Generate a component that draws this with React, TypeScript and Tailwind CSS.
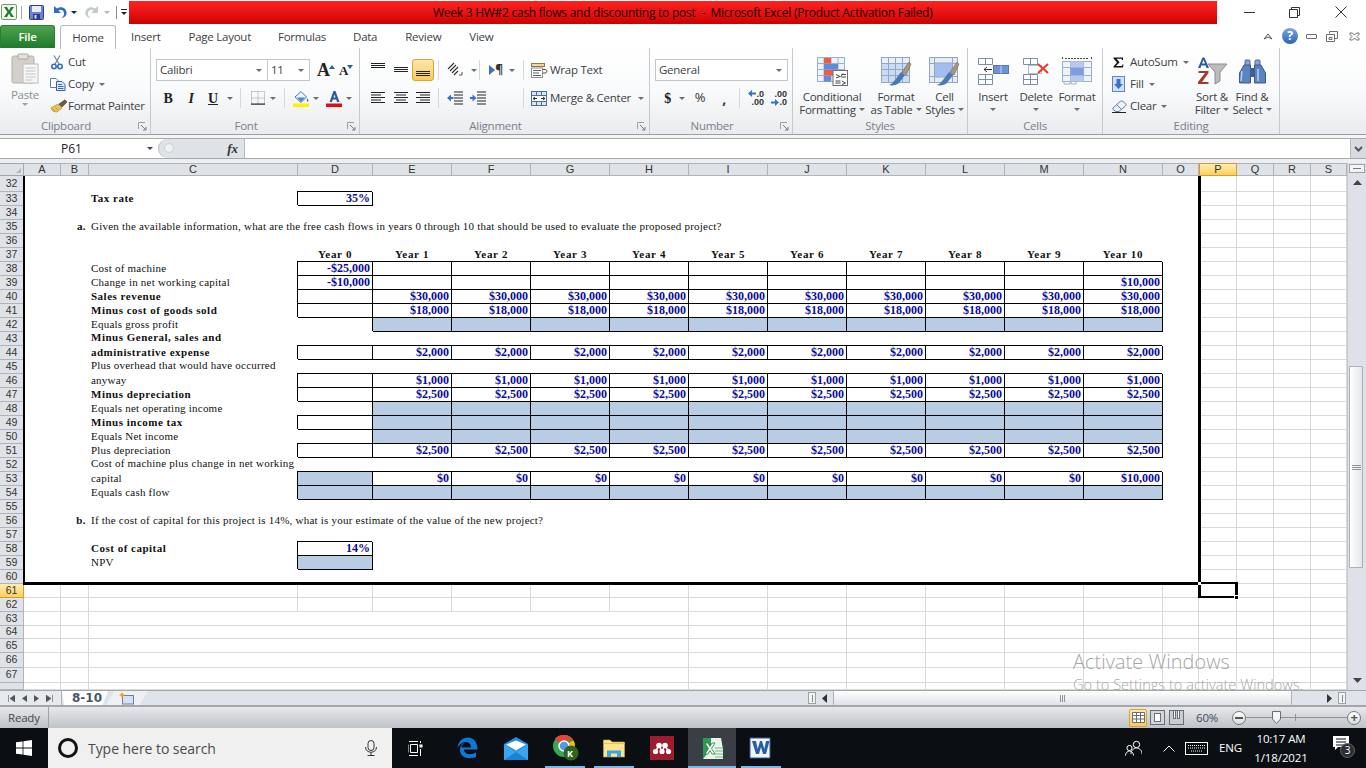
import React from "react";

const Caret = ({ c = "border-t-[#6b6f75]" }: { c?: string }) => (
  <span className={`inline-block w-0 h-0 border-l-[3px] border-r-[3px] border-t-[3px] border-l-transparent border-r-transparent ${c}`} />
);
const Sep = () => <div className="w-px h-[20px] bg-[#d5d8dc] shrink-0" />;

const Launcher = () => (
  <svg width="9" height="9" viewBox="0 0 9 9" className="absolute right-[3px] bottom-[3px]">
    <path d="M0.5 0.5H7M0.5 0.5V7" stroke="#9aa0a6" fill="none" />
    <path d="M3 3L8 8M8 5V8H5" stroke="#777c82" fill="none" />
  </svg>
);

const Group = ({ className, label, launcher, children }: { className: string; label: string; launcher?: boolean; children: React.ReactNode }) => (
  <div className={`${className} h-full flex flex-col border-r border-[#c6cad0] shrink-0 relative`}>
    <div className="h-[70px] flex">{children}</div>
    <div className={`h-[17px] flex items-center justify-center text-[#7b8088] ${launcher ? "pr-[18px]" : ""}`}>{label}</div>
    {launcher && <Launcher />}
  </div>
);

const Lines = ({ ws, y0 = 1, gap = 2.5, color = "#222" }: { ws: [number, number][]; y0?: number; gap?: number; color?: string }) => (
  <svg width="16" height="14" viewBox="0 0 16 14">
    {ws.map(([x, w], i) => (
      <rect key={i} x={x} y={y0 + i * gap} width={w} height="1" fill={color} />
    ))}
  </svg>
);

const PasteIcon = () => (
  <svg width="28" height="31" viewBox="0 0 28 31">
    <rect x="1" y="3" width="22" height="27" rx="2" fill="#d4cfc9" stroke="#b3aea8" />
    <rect x="7" y="1" width="10" height="5" rx="1" fill="#e5e2de" stroke="#a9a49e" />
    <rect x="12" y="11" width="15" height="19" fill="#f7f7f7" stroke="#bbb" />
    <path d="M14.5 15h10M14.5 18h10M14.5 21h10M14.5 24h10M14.5 27h7" stroke="#c4c4c4" />
  </svg>
);
const CutIcon = () => (
  <svg width="12" height="15" viewBox="0 0 12 15">
    <path d="M3 0.5L8 9M9 0.5L4 9" stroke="#7f8792" strokeWidth="1.3" fill="none" />
    <circle cx="3" cy="11.5" r="2.2" fill="none" stroke="#2f6fc0" strokeWidth="1.6" />
    <circle cx="9" cy="11.5" r="2.2" fill="none" stroke="#2f6fc0" strokeWidth="1.6" />
  </svg>
);
const CopyIcon = () => (
  <svg width="16" height="13" viewBox="0 0 16 13">
    <path d="M0.5 0.5H6L8 2.5V9.5H0.5Z" fill="#fff" stroke="#5a7fb0" />
    <path d="M6.5 3.5H12L15 6.5V12.5H6.5Z" fill="#dfeafa" stroke="#2f5fa8" />
    <path d="M8 6.5h4M8 8.5h5.5M8 10.5h5.5" stroke="#3a68ad" />
  </svg>
);
const PainterIcon = () => (
  <svg width="18" height="14" viewBox="0 0 18 14">
    <path d="M1 9L8 5L12 9L7 13C4 13 2 12 1 9Z" fill="#e9c65b" stroke="#a98a2c" strokeWidth="0.7" />
    <path d="M9 5L15 0.8L17 3L12 8Z" fill="#6b5c46" stroke="#43392b" strokeWidth="0.6" />
    <path d="M3 10L5 12M5.5 8.5L8 11" stroke="#a98a2c" strokeWidth="0.7" />
  </svg>
);
const GrowA = ({ small, up }: { small?: boolean; up?: boolean }) => (
  <span className={`relative inline-flex items-end font-['Liberation_Serif',serif] font-bold tracking-normal text-[#222] ${small ? "text-[13px]" : "text-[18px]"} leading-none`}>
    A
    <svg width="6" height="4" viewBox="0 0 6 4" className={`-ml-[1px] ${small ? "mb-[8px]" : "mb-[10px]"}`}>
      <path d={up ? "M0 4L3 0L6 4Z" : "M0 0H6L3 4Z"} fill="#2d5fa8" />
    </svg>
  </span>
);
const BordersIcon = () => (
  <svg width="14" height="14" viewBox="0 0 14 14">
    <path d="M0.5 0.5H13.5V13M0.5 0.5V13M7 0.5V13M0.5 7H13.5" stroke="#9a9a9a" strokeDasharray="1 1" fill="none" />
    <rect x="0" y="12.5" width="14" height="1.2" fill="#222" />
  </svg>
);
const FillIcon = () => (
  <svg width="17" height="17" viewBox="0 0 17 17">
    <path d="M2 7L8 1.5L13.5 7L8 12.5Z" fill="#eef3fa" stroke="#4a77b4" />
    <path d="M4 7.5H12L8 12Z" fill="#4f86c9" />
    <path d="M14 8c1.3 2 2 3 1.2 3.6S13.4 10.5 14 8Z" fill="#3c6fb3" />
    <rect x="0" y="13.5" width="16" height="3.5" fill="#fff200" />
  </svg>
);
const FontColor = () => (
  <svg width="17" height="17" viewBox="0 0 17 17">
    <path d="M3.5 12L7.5 1H9.5L13.5 12H11L10.2 9.5H6.8L6 12ZM7.5 7.5H9.5L8.5 4.5Z" fill="#2d5a9e" />
    <rect x="0" y="13.5" width="16" height="3.5" fill="#e8090f" />
  </svg>
);
const OrientIcon = () => (
  <svg width="18" height="16" viewBox="0 0 18 16">
    <g stroke="#333" strokeWidth="1.1" fill="none">
      <path d="M2 7L8 1M4 9L10 3M6 11L12 5M8 13L12 9" />
    </g>
    <path d="M13 13H16V10" stroke="#555" fill="none" />
  </svg>
);
const IndentMark = () => (
  <span className="flex items-center text-[12px] leading-none text-[#333]">
    <svg width="6" height="10" viewBox="0 0 6 10">
      <path d="M0 0L6 5L0 10Z" fill="#3b6fb8" />
    </svg>
    <span className="font-bold">¶</span>
  </span>
);
const IndentIcon = ({ dir }: { dir: "l" | "r" }) => (
  <svg width="16" height="14" viewBox="0 0 16 14">
    <path d="M7 1h9M7 4h9M7 7h9M7 10h9M7 13h9" stroke="#222" />
    <path d={dir === "l" ? "M0 7L4 3.5V6H6.5V8H4V10.5Z" : "M6.5 7L2.5 3.5V6H0V8H2.5V10.5Z"} fill="#3b72c4" />
  </svg>
);
const WrapIcon = () => (
  <svg width="17" height="15" viewBox="0 0 17 15">
    <rect x="0.5" y="0.5" width="13" height="3" fill="#e8d7b0" stroke="#a0752e" />
    <path d="M1 6.5H14C16.5 6.5 16.5 10 14 10H12" stroke="#444" fill="none" />
    <path d="M12 8.5V11.5L10 10Z" fill="#444" />
    <rect x="0.5" y="5" width="11" height="9.5" fill="#fff" stroke="#8a8f96" />
    <path d="M2 7.5H10M2 10H8M2 12.5H10" stroke="#5a6068" />
  </svg>
);
const MergeIcon = () => (
  <svg width="16" height="15" viewBox="0 0 16 15">
    <rect x="0.5" y="0.5" width="15" height="14" fill="#dbe6f4" stroke="#4f6c94" />
    <path d="M0.5 4.5H15.5M0.5 10.5H15.5M5.5 0.5V4.5M10.5 0.5V4.5M5.5 10.5V14.5M10.5 10.5V14.5" stroke="#4f6c94" />
    <rect x="1" y="5" width="14" height="5" fill="#fff" />
    <path d="M2 7.5H6M4 6L2 7.5L4 9M14 7.5H10M12 6L14 7.5L12 9" stroke="#333" fill="none" />
  </svg>
);
const DecIcon = ({ inc }: { inc?: boolean }) => (
  <span className="relative flex flex-col items-end w-[16px] font-bold text-[9px] leading-[8px] tracking-normal text-[#333] font-['Liberation_Sans',sans-serif]">
    <span>{inc ? ".0" : ".00"}</span>
    <span>{inc ? ".00" : ".0"}</span>
    <svg width="8" height="7" viewBox="0 0 8 7" className={`absolute left-0 ${inc ? "top-0" : "top-[9px]"}`}>
      <path d={inc ? "M0 3.5L4 0V2.5H8V4.5H4V7Z" : "M8 3.5L4 0V2.5H0V4.5H4V7Z"} fill="#3b72c4" />
    </svg>
  </span>
);
const CondIcon = () => (
  <svg width="31" height="29" viewBox="0 0 31 29">
    <rect x="0.5" y="0.5" width="27" height="24" fill="#eef2f9" stroke="#9eb0c8" />
    <path d="M7 0.5V24.5M14 0.5V24.5M21 0.5V24.5M0.5 6.5H27.5M0.5 12.5H27.5M0.5 18.5H27.5" stroke="#9eb0c8" />
    <rect x="7" y="1" width="7" height="5.5" fill="#ef5a44" />
    <rect x="7" y="7" width="14" height="5.5" fill="#5a8ddb" />
    <rect x="7" y="13" width="14" height="5.5" fill="#ef5a44" />
    <rect x="7" y="19" width="7" height="5.5" fill="#5a8ddb" />
    <rect x="16" y="13.5" width="14.5" height="15" fill="#fff" stroke="#6b6f75" />
    <path d="M19 17.5L23 19.5L19 21M18.5 24H23.5M18.5 26H23.5M26 16.5L23.5 20M24.5 17.5H29M24.5 20H29M25 24L28.5 26L25 27.5" stroke="#333" fill="none" strokeWidth="0.9" />
  </svg>
);
const Brush = () => (
  <g>
    <path d="M14 23L20 15L24 18L18 26C16 28 11 29 8 28C11 27 12 25 14 23Z" fill="#4b78b8" />
    <path d="M21 15L28 5L30 7L25 18Z" fill="#a9977c" stroke="#6f6350" strokeWidth="0.6" />
  </g>
);
const TableIcon = () => (
  <svg width="31" height="29" viewBox="0 0 31 29">
    <rect x="0.5" y="0.5" width="28" height="25" fill="#c9dbf6" stroke="#93a7c2" />
    <rect x="1" y="1" width="27" height="5" fill="#e9f0fb" />
    <path d="M7.5 0.5V25.5M14.5 0.5V25.5M21.5 0.5V25.5M0.5 6.5H28.5M0.5 12.5H28.5M0.5 18.5H28.5" stroke="#93a7c2" />
    <Brush />
  </svg>
);
const CellStylesIcon = () => (
  <svg width="31" height="29" viewBox="0 0 31 29">
    <rect x="0.5" y="0.5" width="28" height="25" fill="#e6ecf5" stroke="#93a7c2" />
    <path d="M0.5 6.5H5.5M23.5 6.5H28.5M0.5 19.5H5.5M23.5 19.5H28.5M5.5 0.5V6.5M23.5 0.5V6.5M5.5 19.5V25.5M23.5 19.5V25.5" stroke="#93a7c2" />
    <rect x="5.5" y="6" width="18" height="14" fill="#a3bdf0" stroke="#93a7c2" />
    <Brush />
  </svg>
);
const InsertIcon = () => (
  <svg width="31" height="27" viewBox="0 0 31 27">
    <path d="M0.5 0.5H14.5V6.5H0.5ZM7.5 0.5V6.5M0.5 16.5H14.5V26.5H0.5ZM7.5 16.5V26.5M0.5 21.5H14.5" fill="#fff" stroke="#7d8ea6" />
    <rect x="15.5" y="7.5" width="15" height="8" fill="#6f93d8" stroke="#5a76a8" />
    <path d="M23 7.5V15.5" stroke="#c7d5ef" />
    <path d="M14 11.5H6M9 9L6 11.5L9 14" stroke="#333" fill="none" />
  </svg>
);
const DeleteIcon = () => (
  <svg width="27" height="27" viewBox="0 0 27 27">
    <path d="M0.5 0.5H14.5V6.5H0.5ZM7.5 0.5V6.5M0.5 16.5H14.5V26.5H0.5ZM7.5 16.5V26.5M0.5 21.5H14.5" fill="#fff" stroke="#7d8ea6" />
    <rect x="5.5" y="7.5" width="13" height="8" fill="#fff" stroke="#5d78ad" strokeDasharray="1 1" />
    <path d="M15 6L25 15M25 6L15 15" stroke="#ea3a22" strokeWidth="2" />
  </svg>
);
const FormatIcon = () => (
  <svg width="30" height="30" viewBox="0 0 30 30">
    <path d="M0.5 1V4M29.5 1V4M3 2.5H27" stroke="#444" strokeDasharray="2 1" fill="none" />
    <rect x="0.5" y="5.5" width="29" height="20" fill="#eef2f9" stroke="#9eb0c8" />
    <path d="M8.5 5.5V25.5M21.5 5.5V25.5M0.5 11.5H29.5M0.5 19.5H29.5" stroke="#9eb0c8" />
    <rect x="8.5" y="11.5" width="13" height="8" fill="#7d9ee0" />
    <rect x="8.5" y="5.5" width="13" height="6" fill="#b8caec" />
    <rect x="8.5" y="19.5" width="13" height="6" fill="#b8caec" />
    <path d="M2 25.5V28H8V25.5M9 25.5V28H14V25.5" fill="none" stroke="#9eb0c8" />
  </svg>
);
const SigmaIcon = () => (
  <svg width="11" height="11" viewBox="0 0 11 11">
    <path d="M0.5 0.5H10V3H9L8.5 1.8H3.5L6.5 5.2L3 9H9L9.5 7.5H10.5L10 10.5H0.5V9.5L4 5.5L0.5 1.5Z" fill="#111" />
  </svg>
);
const FillDown = () => (
  <svg width="13" height="16" viewBox="0 0 13 16">
    <rect x="0.5" y="0.5" width="12" height="15" fill="#cfe0f7" stroke="#5e86c0" />
    <path d="M4.5 3H8.5V8H11L6.5 13L2 8H4.5Z" fill="#3a72c6" />
  </svg>
);
const EraserIcon = () => (
  <svg width="15" height="13" viewBox="0 0 15 13">
    <path d="M1 8L8 1.5C9 0.8 10 0.8 11 1.5L13.5 3.5C14.3 4.3 14.3 5 13.5 6L7 11.5H4L1 9.5Z" fill="#eef0f3" stroke="#5e7fae" />
    <path d="M4.5 4.5L9 9" stroke="#5e7fae" />
    <path d="M0 12.5H14" stroke="#222" />
  </svg>
);
const SortIcon = () => (
  <svg width="31" height="28" viewBox="0 0 31 28">
    <path d="M11 7H30L23 15V24L18 27V15Z" fill="#bcbcbc" stroke="#8c8c8c" />
    <path d="M1 11L5.5 0.5H7.5L12 11H9.5L8.7 8.5H4.3L3.5 11ZM5 6.5H8L6.5 3Z" fill="#2f5aa0" />
    <path d="M1.5 14H11.5V16L5 25H11.5V27H1V25L8 16H1.5Z" fill="#a23a30" />
  </svg>
);
const BinocIcon = () => (
  <svg width="27" height="25" viewBox="0 0 27 25">
    <rect x="6" y="1" width="5" height="6" rx="1" fill="#8aa5cf" stroke="#4c6694" />
    <rect x="16" y="1" width="5" height="6" rx="1" fill="#8aa5cf" stroke="#4c6694" />
    <path d="M5 6H11.5V24H0.5V14Z" fill="#5b83c0" stroke="#3e5a8c" />
    <path d="M15.5 6H22L26.5 14V24H15.5Z" fill="#5b83c0" stroke="#3e5a8c" />
    <rect x="11" y="9" width="5" height="9" fill="#42608f" />
    <path d="M3 12L2 22M19 10V22" stroke="#b9cdea" strokeWidth="1.5" />
  </svg>
);

const SmallRow = ({ icon, label, caret, slot }: { icon: React.ReactNode; label: string; caret?: boolean; slot: string }) => (
  <div className="h-[22px] flex items-center whitespace-nowrap">
    <span className={`${slot} flex shrink-0`}>{icon}</span>
    <span>{label}</span>
    {caret && (
      <span className="ml-[5px] flex items-center">
        <Caret />
      </span>
    )}
  </div>
);

const BigBtn = ({ className, icon, l1, l2 }: { className: string; icon: React.ReactNode; l1: string; l2: string }) => (
  <div className={`${className} flex flex-col items-center shrink-0 pt-[8px] whitespace-nowrap`}>
    <div className="h-[30px] flex items-center">{icon}</div>
    <div className="mt-[4px] text-center leading-[13px]">
      <div>{l1}</div>
      <div className="flex items-center justify-center gap-[3px] h-[13px]">
        {l2}
        <Caret />
      </div>
    </div>
  </div>
);

const ComboBox = ({ className, text }: { className: string; text: string }) => (
  <div className={`${className} h-[22px] bg-white border border-[#c3c7cc] flex items-center justify-between pl-[3px] pr-[5px]`}>
    <span>{text}</span>
    <Caret />
  </div>
);

function Ribbon() {
  return (
    <div className="h-[87px] flex text-[11.5px] tracking-[-0.25px] text-[#3b3f45] border-b border-[#9ca0a6] bg-gradient-to-b from-white via-[#f9fafb] to-[#e9ebee]">
      <Group className="w-[151px]" label="Clipboard" launcher>
        <div className="w-[50px] flex flex-col items-center pt-[5px] text-[#8f8f8f]">
          <PasteIcon />
          <span className="mt-[3px] leading-[15px]">Paste</span>
          <span className="mt-[1px] flex"><Caret c="border-t-[#a0a0a0]" /></span>
        </div>
        <div className="pt-[3px]">
          <SmallRow slot="w-[18px] pl-[1px]" icon={<CutIcon />} label="Cut" />
          <SmallRow slot="w-[18px]" icon={<CopyIcon />} label="Copy" caret />
          <SmallRow slot="w-[18px]" icon={<PainterIcon />} label="Format Painter" />
        </div>
      </Group>
      <Group className="w-[209px]" label="Font" launcher>
        <div className="pt-[11px] pl-[5px]">
          <div className="flex items-center">
            <ComboBox className="w-[112px]" text="Calibri" />
            <ComboBox className="w-[43px] -ml-px" text="11" />
            <span className="ml-[7px] w-[22px] flex"><GrowA up /></span>
            <span className="w-[14px] flex"><GrowA small /></span>
          </div>
          <div className="flex items-center h-[20px] mt-[7px]">
            <span className="w-[24px] font-['Liberation_Serif',serif] font-bold text-[14px] text-[#222] text-center">B</span>
            <span className="w-[22px] font-['Liberation_Serif',serif] italic font-bold text-[14px] text-[#222] text-center">I</span>
            <span className="w-[22px] font-['Liberation_Serif',serif] font-bold underline text-[14px] text-[#222] text-center">U</span>
            <span className="w-[11px] flex justify-center"><Caret /></span>
            <span className="ml-[5px]"><Sep /></span>
            <span className="ml-[10px] flex"><BordersIcon /></span>
            <span className="ml-[5px] flex"><Caret /></span>
            <span className="ml-[8px]"><Sep /></span>
            <span className="ml-[8px] flex"><FillIcon /></span>
            <span className="ml-[3px] flex"><Caret /></span>
            <span className="ml-[7px] flex"><FontColor /></span>
            <span className="ml-[3px] flex"><Caret /></span>
          </div>
        </div>
      </Group>
      <Group className="w-[290px]" label="Alignment" launcher>
        <div className="pt-[11px] pl-[6px]">
          <div className="flex items-center h-[22px]">
            <span className="w-[23px] flex justify-center"><Lines ws={[[1, 14], [1, 14], [1, 14]]} y0={0} gap={2} /></span>
            <span className="w-[23px] flex justify-center"><Lines ws={[[1, 14], [1, 14], [1, 14]]} y0={4} gap={2} /></span>
            <span className="w-[22px] h-[22px] flex justify-center items-center rounded-[3px] border border-[#d8a33b] bg-gradient-to-b from-[#fde9a8] to-[#fbc95e]">
              <Lines ws={[[1, 14], [1, 14], [1, 14]]} y0={8} gap={2} />
            </span>
            <span className="ml-[4px]"><Sep /></span>
            <span className="w-[32px] flex justify-center"><OrientIcon /></span>
            <span className="w-[8px] flex"><Caret /></span>
            <Sep />
            <span className="w-[32px] flex justify-center"><IndentMark /></span>
            <span className="w-[14px] -ml-[3px] flex"><Caret /></span>
            <Sep />
            <span className="ml-[7px] w-[20px]"><WrapIcon /></span>
            <span className="-ml-px">Wrap Text</span>
          </div>
          <div className="flex items-center h-[20px] mt-[7px]">
            <span className="w-[23px] flex justify-center"><Lines ws={[[1, 14], [1, 10], [1, 14], [1, 10], [1, 14]]} /></span>
            <span className="w-[23px] flex justify-center"><Lines ws={[[1, 14], [3, 10], [1, 14], [3, 10], [1, 14]]} /></span>
            <span className="w-[22px] flex justify-center"><Lines ws={[[1, 14], [5, 10], [1, 14], [5, 10], [1, 14]]} /></span>
            <span className="ml-[4px]"><Sep /></span>
            <span className="ml-[8px] flex"><IndentIcon dir="l" /></span>
            <span className="ml-[7px] flex"><IndentIcon dir="r" /></span>
            <span className="ml-[37px]"><Sep /></span>
            <span className="ml-[7px] w-[20px] flex"><MergeIcon /></span>
            <span className="-ml-px whitespace-nowrap">Merge &amp; Center</span>
            <span className="ml-[7px] flex"><Caret /></span>
          </div>
        </div>
      </Group>
      <Group className="w-[143px]" label="Number" launcher>
        <div className="pt-[11px] pl-[5px]">
          <ComboBox className="w-[133px]" text="General" />
          <div className="flex items-center h-[20px] mt-[7px]">
            <span className="w-[22px] text-center font-bold text-[14px] text-[#222] font-['Liberation_Serif',serif] pl-[3px]">$</span>
            <span className="w-[10px] flex justify-center"><Caret /></span>
            <span className="w-[26px] text-center text-[13px] text-[#333]">%</span>
            <span className="w-[22px] text-center font-bold text-[14px] text-[#333]">,</span>
            <span className="ml-[4px]"><Sep /></span>
            <span className="ml-[8px]"><DecIcon inc /></span>
            <span className="ml-[7px]"><DecIcon /></span>
          </div>
        </div>
      </Group>
      <Group className="w-[175px]" label="Styles">
        <BigBtn className="w-[78px]" icon={<CondIcon />} l1="Conditional" l2="Formatting" />
        <BigBtn className="w-[50px]" icon={<TableIcon />} l1="Format" l2="as Table" />
        <BigBtn className="w-[47px]" icon={<CellStylesIcon />} l1="Cell" l2="Styles" />
      </Group>
      <Group className="w-[135px]" label="Cells">
        {[
          ["w-[50px]", <InsertIcon />, "Insert"],
          ["w-[36px]", <DeleteIcon />, "Delete"],
          ["w-[46px]", <FormatIcon />, "Format"],
        ].map(([w, ic, t], i) => (
          <div key={i} className={`${w} flex flex-col items-center pt-[8px] shrink-0`}>
            <div className="h-[30px] flex items-center">{ic}</div>
            <div className="mt-[4px] leading-[13px]">{t}</div>
            <div className="h-[13px] flex items-center"><Caret /></div>
          </div>
        ))}
      </Group>
      <Group className="w-[177px]" label="Editing">
        <div className="w-[86px] pt-[3px] pl-[9px] shrink-0">
          <SmallRow slot="w-[18px] pl-[1px]" icon={<SigmaIcon />} label="AutoSum" caret />
          <SmallRow slot="w-[18px]" icon={<FillDown />} label="Fill" caret />
          <SmallRow slot="w-[18px]" icon={<EraserIcon />} label="Clear" caret />
        </div>
        <BigBtn className="w-[46px]" icon={<SortIcon />} l1="Sort &" l2="Filter" />
        <BigBtn className="w-[34px]" icon={<BinocIcon />} l1="Find &" l2="Select" />
      </Group>
    </div>
  );
}

function TitleBar() {
  return (
    <div className="h-6 flex bg-white">
      <div className="w-[129px] flex items-center shrink-0">
        <svg width="16" height="16" viewBox="0 0 16 16" className="ml-[1px]">
          <rect x="0.5" y="0.5" width="15" height="15" rx="1.5" fill="#f1f7ee" stroke="#6fa269" />
          <path d="M3 3H6L8 6.4L10 3H13L9.5 8L13 13H10L8 9.6L6 13H3L6.5 8Z" fill="#1f7a3a" />
        </svg>
        <span className="ml-[4px] w-px h-[13px] bg-[#a8a8a8]" />
        <svg width="15" height="15" viewBox="0 0 15 15" className="ml-[7px]">
          <rect x="0.5" y="0.5" width="14" height="14" rx="1" fill="#6f81d3" stroke="#2b3c8f" />
          <rect x="3" y="1" width="9" height="6" fill="#e9edf8" />
          <rect x="4" y="9" width="7" height="5.5" fill="#2b3c8f" />
          <rect x="5.5" y="10" width="2" height="3.5" fill="#d8def5" />
        </svg>
        <svg width="14" height="14" viewBox="0 0 14 14" className="ml-[9px]">
          <path d="M1 1V8H8L5.5 5.5C7.5 4 10.5 5 11 8C11.3 10 10 12 8.5 13C12 12.5 14 10 13.5 7C13 3 8 0.5 4 3.5Z" fill="#2f6dc0" />
        </svg>
        <span className="ml-[4px] flex"><Caret c="border-t-[#222]" /></span>
        <svg width="14" height="14" viewBox="0 0 14 14" className="ml-[8px]">
          <path d="M13 1V8H6L8.5 5.5C6.5 4 3.5 5 3 8C2.7 10 4 12 5.5 13C2 12.5 0 10 0.5 7C1 3 6 0.5 10 3.5Z" fill="#c4cbcf" />
        </svg>
        <span className="ml-[5px] flex"><Caret c="border-t-[#b5b5b5]" /></span>
        <span className="ml-[6px] w-px h-[13px] bg-[#8c8c8c]" />
        <span className="ml-[4px] flex flex-col items-center gap-[2px]">
          <span className="w-[6px] h-px bg-[#222]" />
          <Caret c="border-t-[#222]" />
        </span>
      </div>
      <div className="w-[1088px] mt-px flex items-center pl-[304px] text-[12px] tracking-[-0.26px] text-[#240000] bg-gradient-to-b from-[#ff2222] to-[#cf0000] whitespace-pre">
        Week 3 HW#2 cash flows and discounting to post  -  Microsoft Excel (Product Activation Failed)
      </div>
      <div className="flex-1 flex items-center">
        <span className="ml-[27px] w-[11px] h-px bg-[#333]" />
        <svg width="11" height="11" viewBox="0 0 11 11" className="ml-[34px]">
          <path d="M0.5 2.5H8.5V10.5H0.5ZM2.5 2.5V0.5H10.5V8.5H8.5" fill="none" stroke="#333" />
        </svg>
        <svg width="12" height="12" viewBox="0 0 12 12" className="ml-[35px]">
          <path d="M0.5 0.5L11.5 11.5M11.5 0.5L0.5 11.5" stroke="#333" />
        </svg>
      </div>
    </div>
  );
}

function TabRow() {
  const tabs: [string, string][] = [
    ["Insert", "ml-[15px]"],
    ["Page Layout", "ml-[28px]"],
    ["Formulas", "ml-[27px]"],
    ["Data", "ml-[27px]"],
    ["Review", "ml-[28px]"],
    ["View", "ml-[28px]"],
  ];
  return (
    <div className="h-6 flex items-end bg-white text-[11.5px] tracking-[-0.25px] text-[#3b3f45] relative">
      <div className="w-[55px] h-[23px] rounded-t-[3px] flex items-center justify-center text-white font-semibold bg-gradient-to-b from-[#4ea34c] to-[#1b7a2c] border border-[#2c7d35] border-b-0">
        File
      </div>
      <div className="ml-[5px] w-[56px] h-[24px] rounded-t-[3px] border border-[#b9bdc3] border-b-0 bg-white flex items-center justify-center -mb-px z-10">
        Home
      </div>
      {tabs.map(([t, m]) => (
        <div key={t} className={`${m} h-[23px] flex items-center`}>{t}</div>
      ))}
      <div className="flex-1 h-[24px] flex items-center justify-end pr-[6px]">
        <svg width="10" height="7" viewBox="0 0 10 7" className="mr-[9px]">
          <path d="M1 6L5 1L9 6L5 4Z" fill="#fff" stroke="#555" />
        </svg>
        <span className="w-[16px] h-[16px] rounded-full bg-gradient-to-b from-[#7ba8e2] to-[#2c62b8] text-white font-bold text-[12px] leading-[16px] text-center mr-[8px]">?</span>
        <span className="w-[11px] h-[5px] rounded-[1px] border border-[#6a6f76] mr-[9px]" />
        <svg width="12" height="11" viewBox="0 0 12 11" className="mr-[11px]">
          <path d="M3.5 2.5V0.5H11.5V7.5H8.5M0.5 3.5H8.5V10.5H0.5ZM3 6.5H6V8.5H3Z" fill="none" stroke="#6a6f76" />
        </svg>
        <svg width="11" height="9" viewBox="0 0 11 9">
          <path d="M1 1H3.5L5.5 3L7.5 1H10V2.5L8 4.5L10 6.5V8H7.5L5.5 6L3.5 8H1V6.5L3 4.5L1 2.5Z" fill="#fff" stroke="#6a6f76" />
        </svg>
      </div>
    </div>
  );
}

function FormulaBar() {
  return (
    <div className="h-[25px] bg-[#eceef1]">
      <div className="mt-0 h-[21px] flex bg-white border-t border-b border-[#a7abb1]">
        <div className="w-[158px] shrink-0 flex items-center pl-[61px] text-[12px] text-[#222] relative">
          P61
          <span className="absolute left-[147px] top-[8px] flex"><Caret c="border-t-[#444]" /></span>
        </div>
        <div className="w-[86px] shrink-0 flex items-center justify-end pr-[6px] bg-[#dfe3e8] rounded-l-full border-l border-[#b7bbc1] relative font-['Liberation_Serif',serif] italic font-bold text-[13px] text-[#333]">
          <span className="absolute left-[5px] top-[4px] w-[10px] h-[10px] rounded-full bg-[#eef0f3] border border-[#cdd1d6]" />
          <span>fx</span>
        </div>
        <div className="flex-1 border-l border-[#b7bbc1]" />
        <div className="w-[16px] shrink-0 bg-[#d7dbe1] flex items-center justify-center border-l border-[#b7bbc1]">
          <svg width="9" height="6" viewBox="0 0 9 6">
            <path d="M1 1L4.5 4.5L8 1" stroke="#555" strokeWidth="2" fill="none" />
          </svg>
        </div>
      </div>
    </div>
  );
}

const COLS = ["A", "B", "C", "D", "E", "F", "G", "H", "I", "J", "K", "L", "M", "N", "O", "P", "Q", "R", "S"];
const YEARCOLS = ["E", "F", "G", "H", "I", "J", "K", "L", "M", "N"];
const ROWS = Array.from({ length: 37 }, (_, i) => 32 + i);

type Cell = { t?: string; k?: "l" | "b" | "n" | "y"; box?: boolean; fill?: boolean; up?: boolean };

const labels: Record<number, [string, "l" | "b", boolean?]> = {
  33: ["Tax rate", "b"],
  38: ["Cost of machine", "l"],
  39: ["Change in net working capital", "l"],
  40: ["Sales revenue", "b"],
  41: ["Minus cost of goods sold", "b"],
  42: ["Equals gross profit", "l"],
  43: ["Minus General, sales and", "b", true],
  44: ["administrative expense", "b"],
  45: ["Plus overhead that would have occurred", "l", true],
  46: ["anyway", "l"],
  47: ["Minus depreciation", "b"],
  48: ["Equals net operating income", "l"],
  49: ["Minus income tax", "b"],
  50: ["Equals Net income", "l"],
  51: ["Plus depreciation", "l"],
  52: ["Cost of machine plus change in net working", "l", true],
  53: ["capital", "l"],
  54: ["Equals cash flow", "l"],
  58: ["Cost of capital", "b"],
  59: ["NPV", "l"],
  35: ["Given the available information, what are the free cash flows in years 0 through 10 that should be used to evaluate the proposed project?", "l"],
  56: ["If the cost of capital for this project is 14%, what is your estimate of the value of the new project?", "l"],
};
const yearVals: Record<number, string> = { 40: "$30,000", 41: "$18,000", 44: "$2,000", 46: "$1,000", 47: "$2,500", 51: "$2,500", 53: "$0" };
const dBoxes: Record<number, Cell> = {
  33: { t: "35%", k: "n", box: true },
  38: { t: "-$25,000", k: "n", box: true },
  39: { t: "-$10,000", k: "n", box: true },
  40: { box: true },
  41: { box: true },
  44: { box: true },
  46: { box: true },
  47: { box: true },
  49: { box: true },
  51: { box: true },
  53: { box: true, fill: true },
  54: { box: true, fill: true },
  58: { t: "14%", k: "n", box: true },
  59: { box: true, fill: true },
};

function getCell(r: number, c: string): Cell {
  if (c === "C" && labels[r]) return { t: labels[r][0], k: labels[r][1], up: labels[r][2] };
  if (c === "B" && r === 35) return { t: "a.", k: "b" };
  if (c === "B" && r === 56) return { t: "b.", k: "b" };
  if (r === 37 && c === "D") return { t: "Year 0", k: "y" };
  if (c === "D" && dBoxes[r]) return dBoxes[r];
  const yi = YEARCOLS.indexOf(c);
  if (yi >= 0) {
    if (r === 37) return { t: `Year ${yi + 1}`, k: "y" };
    if (r === 38) return { box: true };
    if (r === 39) return c === "N" ? { t: "$10,000", k: "n", box: true } : { box: true };
    if (r === 53 && c === "N") return { t: "$10,000", k: "n", box: true };
    if (yearVals[r]) return { t: yearVals[r], k: "n", box: true };
    if ([42, 48, 49, 50, 54].includes(r)) return { box: true, fill: true };
  }
  return {};
}

function cellClass(r: number, c: string, cell: Cell) {
  const parts: string[] = ["min-w-0 whitespace-nowrap"];
  const i = COLS.indexOf(c);
  if (cell.box) {
    parts.push("border-r border-b border-black shadow-[-1px_-1px_0_0_#000]");
  } else if (r >= 61) {
    parts.push("border-b border-[#d9d9d9]");
    if (r <= 62 || !["C", "D", "E", "F", "G"].includes(c)) parts.push("border-r");
  } else if (i >= 15) {
    parts.push("border-b border-r border-[#d9d9d9]");
  }
  if (cell.fill) parts.push("bg-[#b8cce4]");
  if (cell.k === "l") parts.push("pl-[2px] text-[11px] tracking-[0.22px] text-[#111]");
  if (cell.k === "b" && c === "C") parts.push("pl-[2px] text-[11px] font-bold tracking-[0.5px] text-[#111]");
  if (cell.k === "b" && c === "B") parts.push("text-right pr-[3px] text-[11px] font-bold tracking-[0.4px] text-[#111]");
  if (cell.k === "n") parts.push("text-right pr-[2px] text-[12px] font-bold text-[#0b0b9a]");
  if (cell.k === "y") parts.push("text-center pr-[1px] text-[11px] font-bold tracking-[0.7px] text-[#111]");
  parts.push(cell.up ? "leading-[10px]" : "leading-[13px]");
  return parts.join(" ");
}

function Sheet() {
  return (
    <div className="relative w-[1347px] shrink-0 bg-white font-['Liberation_Serif',serif] overflow-hidden">
      <div className="grid grid-cols-[24px_37px_28px_209px_75px_repeat(10,79px)_36px_38px_37px_37px_36px] grid-rows-[13px_16px_repeat(28,14px)_14px_14px_14px_13px_14px_15px_15px_7px]">
        <div className="bg-[#dfe3e8] border-r border-b border-[#a3a7ad] border-t flex items-end justify-end pr-[2px] pb-[2px]">
          <span className="w-0 h-0 border-b-[5px] border-l-[5px] border-l-transparent border-b-[#b4b8be]" />
        </div>
        {COLS.map((c) => (
          <div
            key={c}
            className={
              c === "P"
                ? "border border-[#d59a3a] bg-gradient-to-b from-[#ffeeb0] to-[#fbd055] flex items-center justify-center font-['Liberation_Sans',sans-serif] text-[11px] text-[#333]"
                : "border-t border-b border-r border-[#b0b4ba] bg-[#dfe3e8] flex items-center justify-center font-['Liberation_Sans',sans-serif] text-[11px] text-[#333]"
            }
          >
            {c}
          </div>
        ))}
        {ROWS.map((r) => (
          <React.Fragment key={r}>
            <div
              className={
                r === 61
                  ? "border-b border-r border-[#d59a3a] bg-gradient-to-b from-[#ffeeb0] to-[#fbd055] flex items-center justify-center font-['Liberation_Sans',sans-serif] text-[10.5px] text-[#333]"
                  : "border-b border-r border-[#b0b4ba] bg-[#dfe3e8] flex items-center justify-center font-['Liberation_Sans',sans-serif] text-[10.5px] text-[#333] overflow-hidden"
              }
            >
              {r < 68 ? r : ""}
            </div>
            {COLS.map((c) => {
              const cell = getCell(r, c);
              return (
                <div key={c} className={cellClass(r, c, cell)}>
                  {cell.t}
                </div>
              );
            })}
          </React.Fragment>
        ))}
      </div>
      <div className="absolute left-[23px] top-[13px] w-[1178px] h-[409px] border-l-2 border-r-[3px] border-b-[3px] border-black pointer-events-none" />
      <div className="absolute left-[1198px] top-[419px] w-[40px] h-[16px] border-[3px] border-t-[2px] border-b-[2px] border-black pointer-events-none" />
      <div className="absolute left-[1198px] top-[419px] w-[3px] h-[3px] bg-white pointer-events-none" />
      <div className="absolute left-[1234px] top-[432px] w-[5px] h-[5px] bg-black border border-white pointer-events-none" />
      <div className="absolute left-[1073px] top-[486px] font-['Open_Sans',sans-serif] font-light text-[#a6a6a6] pointer-events-none whitespace-nowrap">
        <div className="text-[19.8px] leading-[26px] tracking-[0.1px]">Activate Windows</div>
        <div className="text-[14.6px] leading-[20px] -mt-px">Go to Settings to activate Windows.</div>
      </div>
    </div>
  );
}

const VScroll = () => (
  <div className="flex-1 flex flex-col bg-[#dee2e8] border-l border-[#c3c7cd]">
    <div className="h-[9px] mx-[1px] mt-px border border-[#9da2a8] bg-[#f3f4f6] flex items-center justify-center shrink-0">
      <span className="w-[8px] h-px bg-[#777]" />
    </div>
    <div className="h-[18px] flex items-center justify-center shrink-0">
      <svg width="9" height="5" viewBox="0 0 9 5"><path d="M0 5L4.5 0L9 5Z" fill="#444" /></svg>
    </div>
    <div className="h-[175px] shrink-0" />
    <div className="h-[202px] mx-[1px] mr-[3px] shrink-0 bg-gradient-to-r from-white to-[#e4e7eb] border border-[#adb1b7] rounded-[1px] flex items-center justify-center">
      <svg width="9" height="5" viewBox="0 0 9 5"><path d="M0 0.5H9M0 2.5H9M0 4.5H9" stroke="#8f9399" /></svg>
    </div>
    <div className="flex-1" />
    <div className="h-[18px] flex items-center justify-center shrink-0 mb-[1px]">
      <svg width="9" height="5" viewBox="0 0 9 5"><path d="M0 0L4.5 5L9 0Z" fill="#444" /></svg>
    </div>
  </div>
);

function TabBar() {
  return (
    <div className="h-4 flex bg-[#dfe3ea] border-t border-[#a3a7ad] border-b relative">
      <div className="w-[62px] flex items-center justify-around px-[4px] bg-[#e6e9ee] border-r border-[#b0b4ba]">
        <svg width="7" height="7" viewBox="0 0 7 7"><path d="M0.5 0V7M7 0V7L2 3.5Z" fill="#555" stroke="#555" strokeWidth="0.6" /></svg>
        <svg width="5" height="7" viewBox="0 0 5 7"><path d="M5 0V7L0 3.5Z" fill="#555" /></svg>
        <svg width="5" height="7" viewBox="0 0 5 7"><path d="M0 0V7L5 3.5Z" fill="#555" /></svg>
        <svg width="7" height="7" viewBox="0 0 7 7"><path d="M6.5 0V7M0 0V7L5 3.5Z" fill="#555" stroke="#555" strokeWidth="0.6" /></svg>
      </div>
      <div className="w-[46px] bg-white flex items-center pl-[10px] font-['DejaVu_Sans',sans-serif] font-bold text-[12px] text-[#4a5566] [clip-path:polygon(0_0,100%_0,88%_100%,5%_100%)]">
        8-10
      </div>
      <div className="w-[42px] -ml-[2px] flex items-center justify-center bg-[#eef0f3] [clip-path:polygon(20%_0,100%_0,80%_100%,0_100%)]">
        <svg width="16" height="13" viewBox="0 0 16 13">
          <rect x="3.5" y="3.5" width="11" height="8.5" fill="#d5e1f2" stroke="#6d7f99" />
          <path d="M3 0L4 2L6 3L4 4L3 6L2 4L0 3L2 2Z" fill="#eda12b" />
        </svg>
      </div>
      <div className="w-[660px]" />
      <div className="w-[8px] my-[1px] bg-[#f2f3f5] border border-[#9da2a8] flex items-center justify-center">
        <span className="w-px h-[7px] bg-[#888]" />
      </div>
      <div className="w-[17px] flex items-center justify-center">
        <svg width="5" height="9" viewBox="0 0 5 9"><path d="M5 0V9L0 4.5Z" fill="#333" /></svg>
      </div>
      <div className="w-[459px] bg-gradient-to-b from-white to-[#dfe2e7] border-l border-r border-[#adb1b7] flex items-center justify-center rounded-[1px]">
        <svg width="5" height="7" viewBox="0 0 5 7"><path d="M0.5 0V7M2.5 0V7M4.5 0V7" stroke="#8f9399" /></svg>
      </div>
      <div className="flex-1" />
      <div className="w-[14px] flex items-center justify-center">
        <svg width="5" height="9" viewBox="0 0 5 9"><path d="M0 0V9L5 4.5Z" fill="#333" /></svg>
      </div>
      <div className="w-[8px] ml-[2px] my-[1px] bg-[#f2f3f5] border border-[#9da2a8] flex items-center justify-center">
        <span className="w-px h-[7px] bg-[#888]" />
      </div>
      <div className="w-[20px]" />
    </div>
  );
}

function StatusBar() {
  return (
    <div className="h-[22px] flex items-center bg-gradient-to-b from-[#e6e8eb] to-[#bfc2c7] text-[11.5px] tracking-[-0.2px] text-[#45494f] border-t border-[#a3a7ad]">
      <div className="w-[49px] h-full flex items-center pl-[8px] border-r border-[#9ea2a8]">Ready</div>
      <div className="w-[1080px] flex justify-end" />
      <div className="w-[18px] h-[18px] rounded-[2px] border border-[#d8a33b] bg-gradient-to-b from-[#fde9a8] to-[#fbc95e] flex items-center justify-center">
        <svg width="13" height="11" viewBox="0 0 13 11">
          <path d="M0.5 0.5H12.5V10.5H0.5ZM4.5 0.5V10.5M8.5 0.5V10.5M0.5 3.5H12.5M0.5 7H12.5" fill="#fff" stroke="#6a6f76" />
        </svg>
      </div>
      <div className="ml-[3px] w-[15px] h-[15px] border border-[#6a6f76] flex items-center justify-center bg-[#d2d5d9]">
        <span className="w-[7px] h-[9px] bg-white border border-[#6a6f76]" />
      </div>
      <div className="ml-[4px] w-[15px] h-[15px] border border-[#6a6f76] bg-[#c9ccd0] flex items-start gap-px pl-[3px]">
        <span className="w-[3px] h-[8px] bg-white border-x border-b border-[#6a6f76]" />
        <span className="w-[3px] h-[8px] bg-white border-x border-b border-[#6a6f76]" />
      </div>
      <span className="ml-[12px] w-[21px] text-[#3d4a62]">60%</span>
      <span className="ml-[15px] w-[14px] h-[14px] rounded-full border border-[#777] bg-gradient-to-b from-white to-[#d8dadd] flex items-center justify-center">
        <span className="w-[8px] h-[2px] bg-[#555]" />
      </span>
      <div className="w-[101px] h-[1px] bg-[#8f9399] relative">
        <span className="absolute left-[49px] -top-[3px] w-px h-[7px] bg-[#8f9399]" />
        <svg width="9" height="13" viewBox="0 0 9 13" className="absolute left-[26px] -top-[6px]">
          <path d="M0.5 0.5H8.5V8L4.5 12.5L0.5 8Z" fill="#f5f5f5" stroke="#6a6f76" />
        </svg>
      </div>
      <span className="w-[14px] h-[14px] rounded-full border border-[#777] bg-gradient-to-b from-white to-[#d8dadd] flex items-center justify-center text-[#555] font-bold text-[13px] leading-none">+</span>
    </div>
  );
}

const Bar = ({ className }: { className: string }) => (
  <span className={`absolute bottom-0 h-[2px] bg-[#76b9ed] ${className}`} />
);

function Taskbar() {
  return (
    <div className="h-10 bg-[#0b0f14] flex items-center text-white font-['Open_Sans',sans-serif]">
      <div className="w-12 flex justify-center shrink-0">
        <svg width="16" height="16" viewBox="0 0 16 16">
          <path d="M0 2.3L6.6 1.4V7.6H0ZM7.4 1.3L16 0V7.6H7.4ZM0 8.4H6.6V14.6L0 13.7ZM7.4 8.4H16V16L7.4 14.8Z" fill="#fff" />
        </svg>
      </div>
      <div className="w-[344px] h-10 bg-[#f0f0f0] flex items-center pl-[10px] text-[14px] tracking-[-0.05px] text-[#4b4b4b] shrink-0">
        <svg width="20" height="20" viewBox="0 0 20 20">
          <circle cx="10" cy="10" r="8.5" fill="none" stroke="#111" strokeWidth="3" />
        </svg>
        <span className="ml-[10px]">Type here to search</span>
        <svg width="12" height="16" viewBox="0 0 12 16" className="ml-auto mr-[15px]">
          <rect x="3" y="0.5" width="6" height="10" rx="3" fill="none" stroke="#333" />
          <path d="M0.5 7C0.5 14 11.5 14 11.5 7M6 12.5V15.5M2.5 15.5H9.5" fill="none" stroke="#333" />
        </svg>
      </div>
      <div className="w-12 flex justify-center shrink-0">
        <svg width="16" height="15" viewBox="0 0 16 15">
          <path d="M1 0.5H10M1 14.5H10M2.5 3.5H9.5V11.5H2.5ZM12.5 0V2M12.5 8V15M0 3.5V11.5" stroke="#fff" fill="none" />
          <rect x="11.5" y="3.5" width="3" height="3" fill="#fff" />
        </svg>
      </div>
      <div className="w-[48px] flex justify-center shrink-0 pl-[6px]">
        <svg width="21" height="22" viewBox="0 0 21 22">
          <path d="M0.5 11C1 5 5 0.5 11 0.5C17 0.5 20.5 5.5 20.5 12.5H7C7.2 17.5 13.5 18.5 19 15.5V20C13 22.5 2.5 21.5 3 12C3.3 9 5 6.5 7.5 5.5C5 8 4.5 9 4.7 10.5H14C14 6.5 11 4.5 8 5C4.5 5.5 1.5 8.5 0.5 11Z" fill="#0f78d4" />
        </svg>
      </div>
      <div className="w-[50px] flex justify-center shrink-0 pl-[6px]">
        <svg width="24" height="23" viewBox="0 0 24 23">
          <path d="M0 7L12 0L24 7V23H0Z" fill="#1f8fe0" />
          <path d="M0 7L12 15L24 7V23H0Z" fill="#38a5ee" />
          <path d="M2 7.5L12 3.5L22 7.5L12 13.5Z" fill="#fff" />
          <path d="M0 23L12 15L24 23Z" fill="#1b83d4" />
        </svg>
      </div>
      <div className="w-[54px] h-10 flex items-center justify-center shrink-0 relative pl-[2px]">
        <svg width="26" height="26" viewBox="0 0 26 26">
          <circle cx="11" cy="11" r="11" fill="#34a853" />
          <path d="M11 0A11 11 0 0 1 20.5 5.5H11A5.5 5.5 0 0 0 6 8L2 3.5A11 11 0 0 1 11 0Z" fill="#ea4335" />
          <path d="M20.5 5.5A11 11 0 0 1 11 22L16 13.5A5.5 5.5 0 0 0 16 8Z" fill="#fbbc05" />
          <circle cx="11" cy="11" r="5" fill="#5a94ee" stroke="#fff" strokeWidth="1.5" />
          <circle cx="18" cy="18" r="7.5" fill="#2f6420" />
        </svg>
        <span className="absolute left-[29px] top-[20px] text-[9px] font-bold text-white leading-[12px]">K</span>
        <Bar className="left-[7px] w-[40px]" />
      </div>
      <div className="w-[44px] h-10 flex items-center justify-center shrink-0 relative">
        <svg width="22" height="19" viewBox="0 0 22 19">
          <path d="M0.5 1H7L9 3H21.5V18H0.5Z" fill="#fde58a" stroke="#c9a94a" strokeWidth="0.6" />
          <path d="M0.5 4.5H21.5" stroke="#e8c356" />
          <path d="M4 18V11.5H18V18H14V14.5H8V18Z" fill="#3ba5ea" />
        </svg>
        <Bar className="left-[2px] w-[40px]" />
      </div>
      <div className="w-[52px] flex justify-center shrink-0">
        <svg width="24" height="24" viewBox="0 0 24 24">
          <rect width="24" height="24" fill="#9f1b30" />
          <g fill="#fff">
            <circle cx="5.5" cy="15.5" r="2.6" />
            <circle cx="12" cy="15.5" r="2.6" />
            <circle cx="18.5" cy="15.5" r="2.6" />
            <circle cx="9" cy="9.5" r="2.8" />
            <circle cx="15" cy="9.5" r="2.8" />
          </g>
          <path d="M5.5 15.5L9 9.5L12 15.5L15 9.5L18.5 15.5" stroke="#fff" strokeWidth="1.6" fill="none" />
        </svg>
      </div>
      <div className="w-[48px] h-10 bg-[#3a3e45] flex items-center justify-center shrink-0 relative">
        <svg width="23" height="23" viewBox="0 0 23 23">
          <path d="M2 1H20L22 12V22H2Z" fill="#e8f3ea" />
          <path d="M2 1H10V12L2 22Z" fill="#2f9a55" />
          <path d="M4 6H7L9 9.5L11 6H14L10.5 11.5L14 17H11L9 13.5L7 17H4L7.5 11.5Z" fill="#fff" stroke="#1f7a3a" strokeWidth="0.8" />
          <path d="M14 11H22M14 14H22M14 17H22M14 20H22" stroke="#79b98e" />
        </svg>
        <Bar className="left-0 w-[48px]" />
      </div>
      <div className="w-[48px] h-10 flex items-center justify-center shrink-0 relative">
        <svg width="23" height="23" viewBox="0 0 23 23">
          <path d="M1 1H21V21H1Z" fill="#f2f6fc" stroke="#2a5699" />
          <path d="M3 4H7L8.7 12L11 4H13L15.3 12L17 4H20.5L17 17H14L12 10L10 17H7Z" fill="#2a5da8" />
        </svg>
        <Bar className="left-[5px] w-[40px]" />
      </div>
      <div className="flex-1 flex items-center justify-end h-full text-[11.5px] tracking-[-0.1px]">
        <svg width="17" height="16" viewBox="0 0 17 16" className="mr-[21px]">
          <circle cx="11.5" cy="4.5" r="3.2" fill="none" stroke="#fff" />
          <path d="M6 14C6 10 9 8 11.5 8S17 10 17 14" fill="none" stroke="#fff" />
          <circle cx="4.5" cy="8" r="2.6" fill="#0b0f14" stroke="#fff" />
          <path d="M0.5 15.5C0.5 13 2.5 11 4.5 11S8.5 13 8.5 15.5" fill="none" stroke="#fff" />
        </svg>
        <svg width="12" height="7" viewBox="0 0 12 7" className="mr-[10px]">
          <path d="M0.5 6.5L6 1L11.5 6.5" fill="none" stroke="#fff" />
        </svg>
        <svg width="23" height="13" viewBox="0 0 23 13" className="mr-[11px]">
          <rect x="0.5" y="0.5" width="22" height="12" fill="none" stroke="#fff" />
          <path d="M3 3.5H20M3 6H20M6 9H17" stroke="#fff" strokeDasharray="1 1" />
        </svg>
        <span className="w-[24px] mr-[8px]">ENG</span>
        <div className="w-[60px] mr-[22px] text-center leading-[19px]">
          <div>10:17 AM</div>
          <div>1/18/2021</div>
        </div>
        <div className="relative mr-[17px] w-[16px] h-[16px] -mt-[8px]">
          <svg width="16" height="14" viewBox="0 0 16 14">
            <path d="M0 0H16V11H5L2 14V11H0Z" fill="#fff" />
            <path d="M3 3H13M3 6H13M3 9H11" stroke="#0b0f14" />
          </svg>
          <span className="absolute left-[7px] top-[7px] w-[15px] h-[15px] rounded-full bg-[#2b2f35] border border-[#666] text-[10px] leading-[13px] text-center text-white">3</span>
        </div>
      </div>
    </div>
  );
}

export default function App() {
  return (
    <div className="w-[1366px] h-[768px] overflow-hidden flex flex-col bg-white font-['Open_Sans',sans-serif]">
      <TitleBar />
      <TabRow />
      <Ribbon />
      <div className="h-[3px] bg-[#f3f4f6]" />
      <FormulaBar />
      <div className="h-[527px] flex">
        <Sheet />
        <VScroll />
      </div>
      <TabBar />
      <StatusBar />
      <Taskbar />
    </div>
  );
}
